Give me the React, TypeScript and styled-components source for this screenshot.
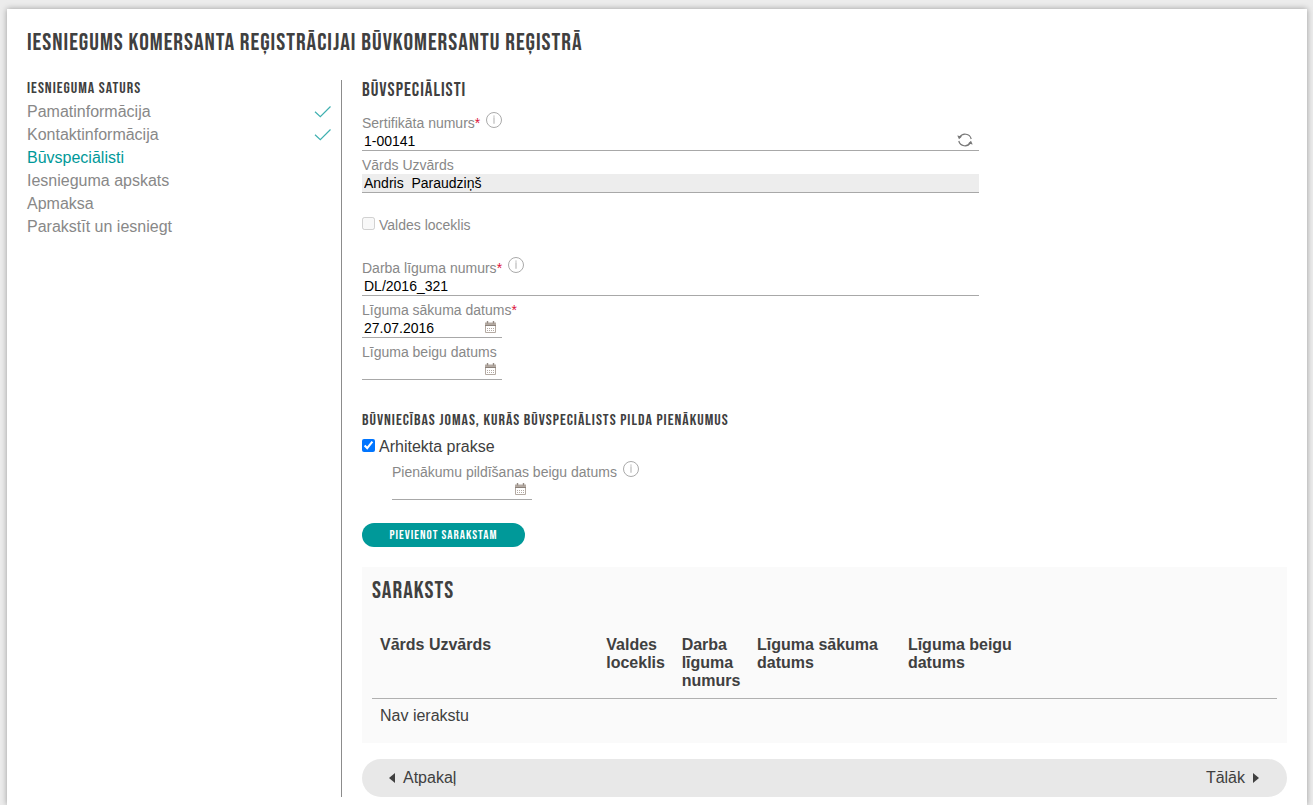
import React, { useState } from 'react';
import styled, { createGlobalStyle, css } from 'styled-components';

const teal = '#009999';
const dark = '#404040';
const muted = '#888888';
const rule = '#a8a8a8';

const display = css`
  font-family: "Bebas Neue", "Liberation Sans Narrow", "Liberation Sans", sans-serif;
  font-weight: normal;
  letter-spacing: 1px;
  text-transform: uppercase;
`;

const GlobalStyle = createGlobalStyle`
  *, *::before, *::after { box-sizing: border-box; }
  body {
    margin: 0;
    background: #ececec;
    color: ${dark};
    font-family: "Liberation Sans", Arial, sans-serif;
    font-size: 16px;
    line-height: 18px;
  }
`;

const Page = styled.div`
  display: flex;
  flex-direction: column;
  min-height: 100vh;
  padding: 9px 6px 0 7px;
`;

const Card = styled.div`
  flex: 1;
  padding: 20px 20px 8px;
  background: #fff;
  box-shadow: 0 0 6px rgba(0, 0, 0, 0.35);
`;

const Title = styled.h1`
  ${display}
  margin: 0 0 23px;
  font-size: 24px;
  line-height: 28px;
`;

const Columns = styled.div`
  display: grid;
  grid-template-columns: minmax(0, 1fr) minmax(0, 3fr);
`;

const Sidebar = styled.nav`
  padding-right: 10px;
  border-right: 1px solid #8c8c8c;
`;

const Main = styled.main`
  padding-left: 20px;
`;

const SmallHeading = styled.h2`
  ${display}
  margin: 0 0 2px;
  font-size: 16px;
  line-height: 18px;
`;

const SectionHeading = styled.h2`
  ${display}
  margin: 0 0 7px;
  font-size: 19px;
  line-height: 22px;
`;

const StepList = styled.ul`
  list-style: none;
  margin: 0;
  padding: 0;
`;

const StepLink = styled.a<{ $active?: boolean }>`
  display: flex;
  align-items: center;
  justify-content: space-between;
  line-height: 23px;
  color: ${(p) => (p.$active ? teal : muted)};
  text-decoration: none;
`;

const Group = styled.div`
  width: calc(100% * 2 / 3);
`;

const Indented = styled.div`
  padding: 2px 0 0 30px;
`;

const FieldLabel = styled.label`
  display: flex;
  padding-top: 5px;
  font-size: 14px;
  line-height: 18px;
  color: ${muted};
`;

const Required = styled.span`
  color: #dc143c;
`;

const InfoIcon = styled.svg`
  flex: none;
  width: 18px;
  height: 18px;
  margin: -3px 0 0 5px;
`;

const Control = styled.div<{ $short?: boolean; $readOnly?: boolean }>`
  display: flex;
  align-items: center;
  width: ${(p) => (p.$short ? '140px' : '100%')};
  height: 19px;
  padding-right: ${(p) => (p.$short ? '5px' : '6px')};
  border-bottom: 1px solid ${rule};
  background: ${(p) => (p.$readOnly ? '#ededed' : 'transparent')};
`;

const TextInput = styled.input`
  flex: 1;
  min-width: 0;
  height: 18px;
  padding: 0 2px;
  border: 0;
  outline: 0;
  background: transparent;
  color: #000;
  font: 14px/18px "Liberation Sans", Arial, sans-serif;
`;

const IconButton = styled.button`
  display: flex;
  padding: 0 0 2px;
  border: 0;
  background: none;
  cursor: pointer;
`;

const Check = styled.label<{ $small?: boolean }>`
  display: flex;
  align-items: center;
  gap: 4px;
  font-size: ${(p) => (p.$small ? '14px' : '16px')};
  color: ${(p) => (p.$small ? muted : dark)};

  input {
    width: 13px;
    height: 13px;
    margin: 0 0 4px;
  }
`;

const MemberRow = styled.div`
  padding: 23px 0 20px;
`;

const Areas = styled.section`
  padding-top: 32px;

  ${SmallHeading} {
    margin-bottom: 8px;
  }
`;

const AddButton = styled.button`
  ${display}
  display: block;
  min-width: 163px;
  height: 24px;
  margin: 23px 0 20px;
  padding: 0 24px;
  border: 0;
  border-radius: 12px;
  background: ${teal};
  color: #fff;
  font-size: 13px;
  line-height: 24px;
  cursor: pointer;
`;

const ListPanel = styled.section`
  padding: 10px;
  background: #fafafa;
`;

const PanelTitle = styled.h2`
  ${display}
  margin: 0 0 22px;
  font-size: 24px;
  line-height: 28px;
`;

const Table = styled.table`
  width: 100%;
  border-spacing: 0;
  table-layout: fixed;
`;

const Col = styled.col<{ $span: number }>`
  width: calc(100% * ${(p) => p.$span} / 12);
`;

const HeadCell = styled.th`
  padding: 9px 8px 8px;
  border-bottom: 1px solid #b0b0b0;
  text-align: left;
  vertical-align: top;
`;

const Cell = styled.td`
  padding: 8px;
`;

const Pager = styled.div`
  display: flex;
  justify-content: space-between;
  align-items: center;
  height: 38px;
  margin-top: 16px;
  padding: 0 28px 0 27px;
  border-radius: 19px;
  background: #e8e8e8;
`;

const PagerButton = styled.button`
  display: flex;
  align-items: center;
  gap: 8px;
  padding: 0;
  border: 0;
  background: none;
  color: ${dark};
  font: 16px/18px "Liberation Sans", Arial, sans-serif;
  cursor: pointer;
`;

const Tick = () => (
  <svg width="17" height="14" viewBox="0 0 17 14" fill="none" stroke="#3fb0b0" strokeWidth="1.2" aria-hidden="true">
    <path d="M1 6.8 6.3 11.7 16.5 1.5" />
  </svg>
);

const Info = () => (
  <InfoIcon viewBox="0 0 18 18" fill="none" stroke="#aaa" aria-hidden="true">
    <circle cx="9" cy="9" r="7.5" />
    <path d="M9 6.3v6.5" stroke="#bbb" strokeWidth="1.2" />
    <path d="M9 4.6v1.2" stroke="#bbb" strokeWidth="1.2" />
  </InfoIcon>
);

const Calendar = () => (
  <svg width="13" height="12" viewBox="0 0 13 12" fill="none" aria-hidden="true">
    <path d="M1.5 2v9.5h10V2" stroke="#b4aaa2" />
    <path d="M1 1.5h11V4H1z" fill="#b4aaa2" />
    <path d="M1 4.5h11" stroke="#8c827b" />
    <path d="M3.5 0v2.5M9.5 0v2.5" stroke="#948a83" strokeWidth="1.4" />
    <path d="M3 7.5h8M3 9.5h8" stroke="#b4aaa2" strokeDasharray="1 1" />
  </svg>
);

const Refresh = () => (
  <svg width="16" height="16" viewBox="0 0 16 16" fill="none" stroke="#777" strokeWidth="1.2" aria-hidden="true">
    <path d="M2.6 5.4A6.3 6.3 0 0 1 14.2 7M13.4 10.6A6.3 6.3 0 0 1 1.8 9" />
    <path d="M.3 3.4 5 4.4 2 7.2zM15.7 12.6 11 11.6 14 8.8z" fill="#777" stroke="none" />
  </svg>
);

const Arrow = ({ right = false }: { right?: boolean }) => (
  <svg width="6" height="10" viewBox="0 0 6 10" fill={dark} aria-hidden="true">
    <path d={right ? 'M0 0 6 5 0 10z' : 'M6 0 0 5 6 10z'} />
  </svg>
);

type FieldProps = {
  id: string;
  label: string;
  value?: string;
  required?: boolean;
  info?: boolean;
  readOnly?: boolean;
  date?: boolean;
  action?: React.ReactNode;
};

function Field({ id, label, value = '', required, info, readOnly, date, action }: FieldProps) {
  return (
    <div>
      <FieldLabel htmlFor={id}>
        {label}
        {required && <Required>*</Required>}
        {info && <Info />}
      </FieldLabel>
      <Control $short={date} $readOnly={readOnly}>
        <TextInput id={id} type="text" defaultValue={value} readOnly={readOnly} />
        {date && (
          <IconButton type="button" aria-label="Kalendārs">
            <Calendar />
          </IconButton>
        )}
        {action}
      </Control>
    </div>
  );
}

const steps = [
  { name: 'Pamatinformācija', done: true },
  { name: 'Kontaktinformācija', done: true },
  { name: 'Būvspeciālisti', active: true },
  { name: 'Iesnieguma apskats' },
  { name: 'Apmaksa' },
  { name: 'Parakstīt un iesniegt' },
];

const columns = [
  { name: 'Vārds Uzvārds', span: 3 },
  { name: 'Valdes loceklis', span: 1 },
  { name: 'Darba līguma numurs', span: 1 },
  { name: 'Līguma sākuma datums', span: 2 },
  { name: 'Līguma beigu datums', span: 2 },
  { name: '', span: 3 },
];

export default function App() {
  const [practice, setPractice] = useState(true);

  return (
    <>
      <GlobalStyle />
      <Page>
        <Card>
          <Title>Iesniegums komersanta reģistrācijai būvkomersantu reģistrā</Title>
          <Columns>
            <Sidebar>
              <SmallHeading>Iesnieguma saturs</SmallHeading>
              <StepList>
                {steps.map((s) => (
                  <li key={s.name}>
                    <StepLink href="#" $active={s.active}>
                      {s.name}
                      {s.done && <Tick />}
                    </StepLink>
                  </li>
                ))}
              </StepList>
            </Sidebar>
            <Main>
              <SectionHeading>Būvspeciālisti</SectionHeading>
              <Group>
                <Field
                  id="certificate"
                  label="Sertifikāta numurs"
                  value="1-00141"
                  required
                  info
                  action={
                    <IconButton type="button" aria-label="Atjaunot">
                      <Refresh />
                    </IconButton>
                  }
                />
                <Field id="name" label="Vārds Uzvārds" value="Andris  Paraudziņš" readOnly />
                <MemberRow>
                  <Check $small>
                    <input type="checkbox" disabled />
                    Valdes loceklis
                  </Check>
                </MemberRow>
                <Field id="contract" label="Darba līguma numurs" value="DL/2016_321" required info />
                <Field id="start" label="Līguma sākuma datums" value="27.07.2016" required date />
                <Field id="end" label="Līguma beigu datums" date />
              </Group>
              <Areas>
                <SmallHeading>Būvniecības jomas, kurās būvspeciālists pilda pienākumus</SmallHeading>
                <Check>
                  <input type="checkbox" checked={practice} onChange={(e) => setPractice(e.target.checked)} />
                  Arhitekta prakse
                </Check>
                <Indented>
                  <Field id="duty-end" label="Pienākumu pildīšanas beigu datums" info date />
                </Indented>
              </Areas>
              <AddButton type="button">Pievienot sarakstam</AddButton>
              <ListPanel>
                <PanelTitle>Saraksts</PanelTitle>
                <Table>
                  <colgroup>
                    {columns.map((c) => (
                      <Col key={c.name} $span={c.span} />
                    ))}
                  </colgroup>
                  <thead>
                    <tr>
                      {columns.map((c) => (
                        <HeadCell key={c.name}>{c.name}</HeadCell>
                      ))}
                    </tr>
                  </thead>
                  <tbody>
                    <tr>
                      <Cell colSpan={6}>Nav ierakstu</Cell>
                    </tr>
                  </tbody>
                </Table>
              </ListPanel>
              <Pager>
                <PagerButton type="button">
                  <Arrow />
                  Atpakaļ
                </PagerButton>
                <PagerButton type="button">
                  Tālāk
                  <Arrow right />
                </PagerButton>
              </Pager>
            </Main>
          </Columns>
        </Card>
      </Page>
    </>
  );
}
